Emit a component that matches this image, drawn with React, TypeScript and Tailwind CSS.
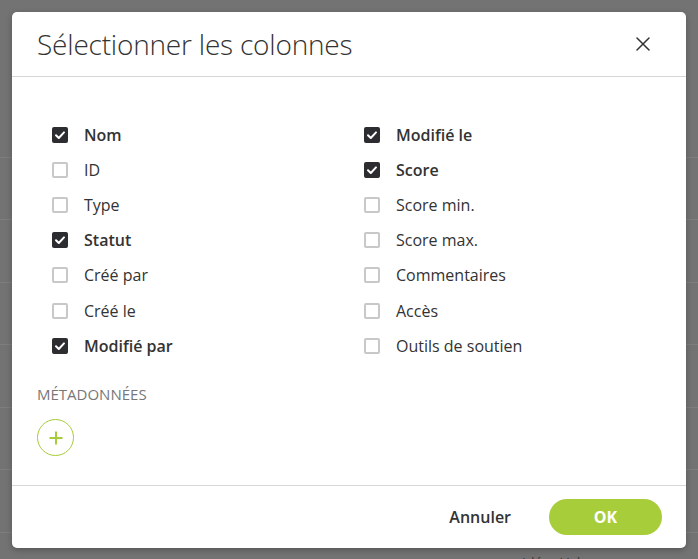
import { useState } from 'react';

type Col = { label: string; checked: boolean };

const LEFT: Col[] = [
  { label: 'Nom', checked: true },
  { label: 'ID', checked: false },
  { label: 'Type', checked: false },
  { label: 'Statut', checked: true },
  { label: 'Créé par', checked: false },
  { label: 'Créé le', checked: false },
  { label: 'Modifié par', checked: true },
];

const RIGHT: Col[] = [
  { label: 'Modifié le', checked: true },
  { label: 'Score', checked: true },
  { label: 'Score min.', checked: false },
  { label: 'Score max.', checked: false },
  { label: 'Commentaires', checked: false },
  { label: 'Accès', checked: false },
  { label: 'Outils de soutien', checked: false },
];

const CheckRow = ({ col, onToggle }: { col: Col; onToggle: () => void }) => (
  <label className="flex items-center gap-4 h-[35.2px] cursor-pointer" onClick={onToggle}>
    {col.checked ? (
      <span className="w-4 h-4 rounded-[2px] bg-[#2b2d31] flex items-center justify-center">
        <svg width="12" height="12" viewBox="0 0 12 12" fill="none">
          <path d="M2 6.2 L4.8 9 L10 3.4" stroke="white" strokeWidth="2" strokeLinecap="round" strokeLinejoin="round" />
        </svg>
      </span>
    ) : (
      <span className="w-4 h-4 rounded-[2px] border-2 border-[#c8c8c8] bg-white" />
    )}
    <span className={`text-[16px] text-[#333] ${col.checked ? 'font-semibold' : 'font-normal'}`}>{col.label}</span>
  </label>
);

export default function App() {
  const [left, setLeft] = useState(LEFT);
  const [right, setRight] = useState(RIGHT);

  const toggle = (list: Col[], set: (c: Col[]) => void, i: number) =>
    set(list.map((c, j) => (j === i ? { ...c, checked: !c.checked } : c)));

  return (
    <div
      className="relative w-[698px] h-[559px] overflow-hidden bg-[#737373]"
      style={{ fontFamily: '"Open Sans", "Noto Sans", sans-serif' }}
    >
      {/* page behind the overlay */}
      <div className="flex flex-col pt-[95px]">
        {[0, 1, 2, 3, 4, 5, 6, 7].map((i) => (
          <div key={i} className="h-[62.5px] border-b border-[#7e7e7e]" />
        ))}
      </div>
      <div className="absolute left-[522px] top-[552px] text-[14px] text-[#3a3a3a]">Idées Val</div>

      <div className="absolute left-[12px] top-[12px] w-[674px] h-[536px] bg-white rounded-[5px] flex flex-col shadow-[0_2px_6px_rgba(0,0,0,0.25)]">
        <div className="h-[65px] shrink-0 flex items-center justify-between pl-[25px] pr-[36px] border-b border-[#d6d6d6]">
          <h1 className="text-[28px] font-light text-[#333] tracking-[-0.2px]">Sélectionner les colonnes</h1>
          <button type="button" className="w-[14px] h-[14px] flex items-center justify-center">
            <svg width="14" height="14" viewBox="0 0 14 14">
              <path d="M1 1 L13 13 M13 1 L1 13" stroke="#333" strokeWidth="1.5" strokeLinecap="round" />
            </svg>
          </button>
        </div>

        <div className="flex-1 flex flex-col pt-[40px]">
          <div className="grid grid-cols-[312px_1fr] pl-[40px]">
            <div className="flex flex-col">
              {left.map((c, i) => (
                <CheckRow key={c.label} col={c} onToggle={() => toggle(left, setLeft, i)} />
              ))}
            </div>
            <div className="flex flex-col">
              {right.map((c, i) => (
                <CheckRow key={c.label} col={c} onToggle={() => toggle(right, setRight, i)} />
              ))}
            </div>
          </div>
          <div className="pl-[25px] mt-[21px] text-[15px] text-[#777] uppercase leading-5">Métadonnées</div>
          <button
            type="button"
            className="ml-[25px] mt-[15px] w-[37px] h-[37px] rounded-full border border-[#a6cc39] flex items-center justify-center"
          >
            <svg width="16" height="16" viewBox="0 0 16 16">
              <path d="M8 1.5 V14.5 M1.5 8 H14.5" stroke="#a6cc39" strokeWidth="2" />
            </svg>
          </button>
        </div>

        <div className="h-[63px] shrink-0 flex items-center justify-end gap-[38px] pr-[24px] border-t border-[#d6d6d6]">
          <button type="button" className="text-[16px] font-semibold text-[#333]">Annuler</button>
          <button
            type="button"
            className="w-[113px] h-[36px] rounded-full bg-[#a8cd3b] text-white text-[16px] font-bold"
          >
            OK
          </button>
        </div>
      </div>
    </div>
  );
}
